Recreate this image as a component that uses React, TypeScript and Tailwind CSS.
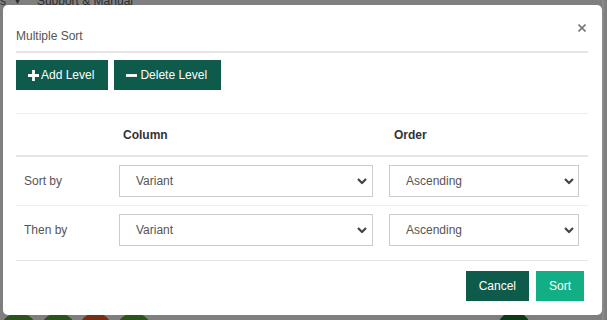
import { useState } from "react";

function Chevron() {
    return (
        <svg width="10" height="7" viewBox="0 0 10 7" className="pointer-events-none absolute top-1/2 right-[14px] -translate-y-1/2">
            <path d="M1 1.5 L5 5.5 L9 1.5" fill="none" stroke="#444" strokeWidth="2.2" />
        </svg>
    );
}

function SortSelect({ value, options, className }: { value: string; options: string[]; className: string }) {
    const [v, setV] = useState(value);
    return (
        <div className={`relative ${className}`}>
            <select
                value={v}
                onChange={(e) => setV(e.target.value)}
                className="h-[32px] w-full appearance-none rounded-none border border-[#cccccc] bg-white pl-[16px] text-[12px] text-[#555] outline-none"
            >
                {options.map((o) => (
                    <option key={o}>{o}</option>
                ))}
            </select>
            <Chevron />
        </div>
    );
}

const columns = ["Variant", "Product", "Price", "Stock"];
const orders = ["Ascending", "Descending"];

function SortRow({ label, border, height }: { label: string; border: boolean; height: string }) {
    return (
        <div className={`grid grid-cols-[95px_270px_207px] items-center ${height} ${border ? "border-b border-[#eeeeee]" : ""}`}>
            <span className="pl-[8px] text-[12px] text-[#555]">{label}</span>
            <SortSelect value="Variant" options={columns} className="px-[8px]" />
            <SortSelect value="Ascending" options={orders} className="pr-[9px] pl-[8px]" />
        </div>
    );
}

export default function App() {
    return (
        <div className="relative h-[320px] w-[607px] overflow-hidden bg-[#7f7f7f] font-['Liberation_Sans',Arial,sans-serif]">
            {/* page behind the backdrop */}
            <div className="absolute top-[-7px] left-0 flex items-center text-[12px] leading-4 text-[#2c2c2c]">
                <span>s</span>
                <span className="ml-[7px] text-[9px]">▼</span>
                <span className="ml-[15px]">Support &amp; Manual</span>
            </div>
            <div className="absolute top-[313px] left-0 flex items-start">
                <div className="h-[36px] w-[37px] rounded-full bg-[#2b531c]" />
                <div className="ml-[3px] h-[36px] w-[36px] rounded-full bg-[#2b531c]" />
                <div className="ml-[3px] h-[36px] w-[33px] rounded-full bg-[#7a2d12]" />
                <div className="ml-[4px] h-[36px] w-[36px] rounded-full bg-[#2b531c]" />
            </div>
            <div className="absolute top-[312px] left-[497px] h-[36px] w-[34px] rounded-full bg-[#0b3a14]" />
            <div className="absolute top-0 right-[3px] h-[320px] w-[2px] bg-[#8a8a8a]" />

            {/* modal */}
            <div className="relative mt-[5px] ml-[3px] flex h-[310px] w-[599px] flex-col rounded-[5px] bg-white pr-[14px] pl-[13px]">
                <div className="flex justify-between border-b-2 border-[#e5e5e5]">
                    <h4 className="pt-[23px] pb-[7px] text-[12px] leading-4 text-[#555]">Multiple Sort</h4>
                    <button className="mt-[19px] mr-[2px] flex h-[8px] w-[8px] items-center justify-center">
                        <svg width="8" height="8" viewBox="0 0 8 8">
                            <path d="M0.5 0.5 L7.5 7.5 M7.5 0.5 L0.5 7.5" stroke="#777" strokeWidth="1.6" />
                        </svg>
                    </button>
                </div>

                {/* level buttons */}
                <div className="mt-[7px] flex gap-[6px]">
                    <button className="flex h-[30px] items-center gap-[2px] bg-[#0e5a4b] pr-[14px] pl-[12px] text-[12px] text-white">
                        <svg width="11" height="11" viewBox="0 0 11 11">
                            <path d="M5.5 0 V11 M0 5.5 H11" stroke="white" strokeWidth="2.8" />
                        </svg>
                        Add Level
                    </button>
                    <button className="flex h-[30px] items-center gap-[3px] bg-[#0e5a4b] pr-[14px] pl-[12px] text-[12px] text-white">
                        <svg width="11" height="11" viewBox="0 0 11 11">
                            <path d="M0 5.5 H11" stroke="white" strokeWidth="2.8" />
                        </svg>
                        Delete Level
                    </button>
                </div>

                {/* sort table */}
                <div className="mt-[23px] border-t border-[#eeeeee]">
                    <div className="grid h-[43px] grid-cols-[95px_270px_207px] items-center border-b-2 border-[#e5e5e5] text-[12px] font-bold text-[#333]">
                        <span />
                        <span className="pl-[12px]">Column</span>
                        <span className="pl-[13px]">Order</span>
                    </div>
                    <SortRow label="Sort by" border height="h-[49px]" />
                    <SortRow label="Then by" border={false} height="h-[47px]" />
                </div>

                {/* footer */}
                <div className="mt-[7px] flex justify-end gap-[7px] border-t border-[#e5e5e5] pt-[10px] pr-[4px]">
                    <button className="h-[30px] bg-[#0e5a4b] px-[13px] text-[12px] text-white">Cancel</button>
                    <button className="h-[30px] bg-[#12ae85] px-[13px] text-[12px] text-white">Sort</button>
                </div>
            </div>
        </div>
    );
}
